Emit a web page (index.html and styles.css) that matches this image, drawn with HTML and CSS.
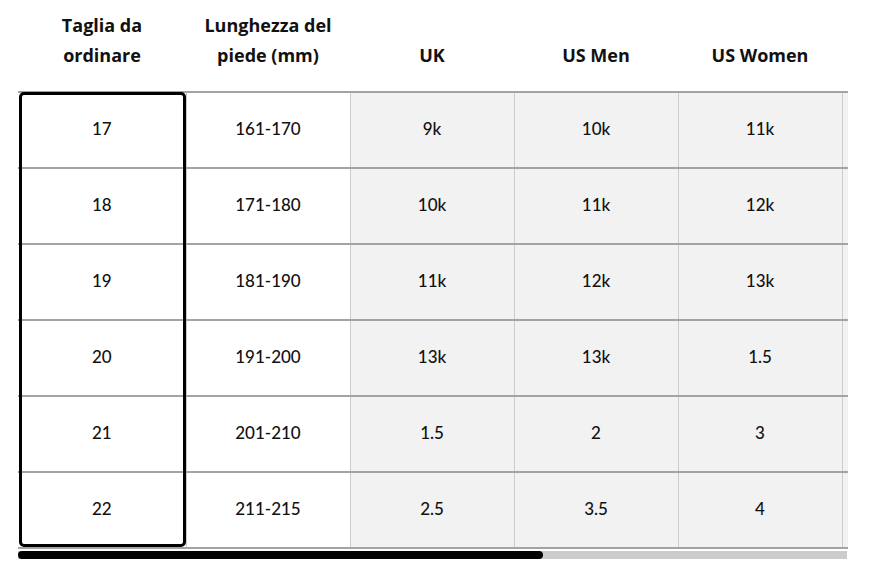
FILE: index.html
```html
<!DOCTYPE html>
<html lang="it">
<head>
<meta charset="utf-8">
<title>Guida taglie</title>
<link rel="stylesheet" href="styles.css">
</head>
<body>
<div class="wrap">
  <div class="scroller">
    <table class="sizes">
      <colgroup>
        <col class="c-first"><col class="c"><col class="c"><col class="c"><col class="c"><col class="c"><col class="c"><col class="c">
      </colgroup>
      <thead>
        <tr>
          <th>Taglia da<br>ordinare</th>
          <th>Lunghezza del<br>piede (mm)</th>
          <th>UK</th>
          <th>US Men</th>
          <th>US Women</th>
          <th></th>
          <th></th>
          <th></th>
        </tr>
      </thead>
      <tbody>
        <tr><td>17</td><td>161-170</td><td class="g">9k</td><td class="g">10k</td><td class="g">11k</td><td class="g"></td><td class="g"></td><td class="g"></td></tr>
        <tr><td>18</td><td>171-180</td><td class="g">10k</td><td class="g">11k</td><td class="g">12k</td><td class="g"></td><td class="g"></td><td class="g"></td></tr>
        <tr><td>19</td><td>181-190</td><td class="g">11k</td><td class="g">12k</td><td class="g">13k</td><td class="g"></td><td class="g"></td><td class="g"></td></tr>
        <tr><td>20</td><td>191-200</td><td class="g">13k</td><td class="g">13k</td><td class="g">1.5</td><td class="g"></td><td class="g"></td><td class="g"></td></tr>
        <tr><td>21</td><td>201-210</td><td class="g">1.5</td><td class="g">2</td><td class="g">3</td><td class="g"></td><td class="g"></td><td class="g"></td></tr>
        <tr><td>22</td><td>211-215</td><td class="g">2.5</td><td class="g">3.5</td><td class="g">4</td><td class="g"></td><td class="g"></td><td class="g"></td></tr>
      </tbody>
    </table>
    <div class="selected"></div>
  </div>
  <div class="track"><div class="thumb"></div></div>
</div>
</body>
</html>
```
FILE: styles.css
```css
html, body {
  margin: 0;
  padding: 0;
  background: #ffffff;
}
body {
  font-family: "Lato", "Noto Sans", sans-serif;
  color: #111111;
}
.wrap {
  padding-left: 18px;
  width: 830px;
}
.scroller {
  position: relative;
  width: 830px;
  overflow: hidden;
}
.sizes {
  border-collapse: collapse;
  table-layout: fixed;
  width: 1316px;
}
.c-first { width: 168px; }
.c { width: 164px; }
.sizes th {
  height: 92px;
  box-sizing: border-box;
  padding: 0 0 21px;
  vertical-align: bottom;
  font-family: "Open Sans", "Lato", sans-serif;
  font-size: 18px;
  font-weight: 700;
  line-height: 30px;
  text-align: center;
  color: #111111;
}
.sizes td {
  height: 76px;
  box-sizing: border-box;
  padding: 0 0 3px;
  text-align: center;
  vertical-align: middle;
  font-size: 17px;
  font-weight: 500;
  line-height: 20px;
  border-top: 2px solid #a3a3a3;
  border-bottom: 2px solid #a3a3a3;
  border-left: 1px solid #cccccc;
}
.sizes td.g {
  background: #f2f2f2;
}
.sizes td:first-child {
  border-left: none;
}
.selected {
  position: absolute;
  left: 1px;
  top: 92px;
  width: 167px;
  height: 455px;
  box-sizing: border-box;
  border: 3px solid #000000;
  border-radius: 5px;
  pointer-events: none;
}
.track {
  margin-top: 2px;
  height: 8px;
  width: 829px;
  background: #cccccc;
}
.thumb {
  width: 525px;
  height: 8px;
  background: #000000;
  border-radius: 4px;
}
```
